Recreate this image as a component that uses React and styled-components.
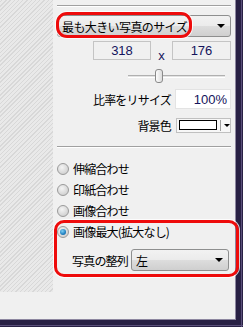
import React from "react";
import styled, { createGlobalStyle } from "styled-components";

const Global = createGlobalStyle`
  html, body { margin: 0; padding: 0; background: #f0f0f0; }
  body {
    font-family: "Noto Sans CJK JP", "Liberation Sans", sans-serif;
    font-size: 12px;
    color: #000;
  }
`;

const Frame = styled.div`
  position: relative;
  width: 243px;
  height: 327px;
  box-sizing: border-box;
  background: #282044;
  overflow: hidden;
`;

const Inner = styled.div`
  width: 236px;
  height: 320px;
  background: #f0f0f0;
  border-right: 1px solid #8d87a0;
  border-bottom: 1px solid #8d87a0;
  box-sizing: border-box;
  display: flex;
  flex-direction: column;
`;

const FrameLine = styled.div`
  position: absolute;
  background: #5a4f7a;
  ${({ $side }) =>
    $side === "right"
      ? "top: 0; bottom: 0; left: 241px; width: 1px;"
      : "left: 0; right: 0; top: 325px; height: 1px;"}
`;

const Top = styled.div`
  display: flex;
  height: 292px;
`;

const Hatch = styled.div`
  width: 53px;
  flex: none;
  background: repeating-linear-gradient(
    -45deg,
    #e9e9e9 0px,
    #e9e9e9 2px,
    #d8d8d8 2px,
    #d8d8d8 3px
  );
`;

const Panel = styled.div`
  flex: 1;
  display: flex;
  flex-direction: column;
  padding: 0 4px 0 4px;
`;

const Separator = styled.div`
  height: 1px;
  background: #a0a0a0;
  border-bottom: 1px solid #fff;
  margin-top: ${({ $top }) => $top}px;
`;

const Select = styled.div`
  height: 22px;
  box-sizing: border-box;
  border: 1px solid #8e8f8f;
  border-radius: 3px;
  background: linear-gradient(#f2f2f2 0%, #ebebeb 50%, #dddddd 51%, #cfcfcf 100%);
  display: flex;
  align-items: center;
  padding: 0 0 0 4px;
  width: ${({ $w }) => ($w ? `${$w}px` : "auto")};
  margin-top: ${({ $top }) => $top || 0}px;
`;

const SelectText = styled.span`
  flex: 1;
  white-space: nowrap;
  letter-spacing: -0.6px;
`;

const Arrow = styled.span`
  width: 0;
  height: 0;
  border-left: 4px solid transparent;
  border-right: 4px solid transparent;
  border-top: 4px solid #000;
  margin-right: ${({ $mr }) => $mr}px;
`;

const Row = styled.div`
  display: flex;
  justify-content: flex-end;
  align-items: center;
  margin-top: ${({ $top }) => $top}px;
  padding-right: ${({ $pr }) => $pr || 0}px;
  height: ${({ $h }) => $h}px;
  gap: ${({ $gap }) => $gap || 0}px;
`;

const NumBox = styled.div`
  width: ${({ $w }) => $w}px;
  height: 19px;
  box-sizing: border-box;
  border: 1px solid #c4c4c4;
  display: flex;
  align-items: center;
  justify-content: center;
  color: #14145c;
  font-family: "Liberation Sans", sans-serif;
  font-size: 13px;
`;

const Times = styled.span`
  width: 21px;
  text-align: center;
  color: #14145c;
  font-family: "Liberation Sans", sans-serif;
  font-size: 13px;
  padding-top: 9px;
`;

const SliderTrack = styled.div`
  position: relative;
  width: 97px;
  height: 3px;
  border-top: 1px solid #b0b0b0;
  border-bottom: 1px solid #fff;
  background: #e3e3e3;
  box-sizing: border-box;
`;

const Thumb = styled.div`
  position: absolute;
  left: 27px;
  top: -7px;
  width: 6px;
  height: 12px;
  border: 1px solid #8a8a8a;
  border-radius: 3px;
  background: linear-gradient(90deg, #fdfdfd, #dcdcdc);
`;

const Label = styled.span`
  white-space: nowrap;
  letter-spacing: -0.8px;
`;

const TextInput = styled.div`
  width: 56px;
  height: 20px;
  box-sizing: border-box;
  background: #fff;
  border: 1px solid #e3e3e3;
  color: #14145c;
  font-family: "Liberation Sans", sans-serif;
  font-size: 13px;
  text-align: right;
  padding: 1px 3px 0 0;
  line-height: 17px;
`;

const ColorPick = styled.div`
  width: 55px;
  height: 15px;
  box-sizing: border-box;
  border: 1px solid #c0c0c0;
  background: #f7f7f7;
  display: flex;
  align-items: center;
  padding-left: 2px;
`;

const Swatch = styled.div`
  width: 38px;
  height: 10px;
  box-sizing: border-box;
  border: 1px solid #000;
  background: #fff;
`;

const PickDivider = styled.div`
  width: 1px;
  height: 11px;
  background: #a0a0a0;
  margin: 0 3px 0 3px;
`;

const SmallArrow = styled.span`
  width: 0;
  height: 0;
  border-left: 3px solid transparent;
  border-right: 3px solid transparent;
  border-top: 3px solid #000;
`;

const Options = styled.div`
  display: flex;
  flex-direction: column;
  margin-top: 10px;
`;

const Option = styled.label`
  height: 21px;
  display: flex;
  align-items: center;
  gap: 4px;
  white-space: nowrap;
`;

const Radio = styled.span`
  width: 12px;
  height: 12px;
  box-sizing: border-box;
  border-radius: 50%;
  border: 1px solid #9a9a9a;
  background: radial-gradient(circle at 40% 35%, #f4f4f4 0%, #d4d4d4 70%, #c4c4c4 100%);
  display: flex;
  align-items: center;
  justify-content: center;
  &::after {
    content: "";
    width: 6px;
    height: 6px;
    border-radius: 50%;
    display: ${({ $on }) => ($on ? "block" : "none")};
    background: radial-gradient(circle at 40% 35%, #7fd0f5 0%, #1f7fc0 60%, #0b4f8a 100%);
  }
`;

const AlignRow = styled.div`
  display: flex;
  align-items: center;
  gap: 3px;
  margin-top: 7px;
  padding-left: 15px;
`;

const Footer = styled.div`
  flex: 1;
`;

const Highlight = styled.div`
  position: absolute;
  border: 3px solid #ee0b0b;
  border-radius: ${({ $r }) => $r}px;
  box-shadow: 0 0 0 1px rgba(255, 255, 255, 0.8);
  box-sizing: border-box;
  pointer-events: none;
`;

const options = [
  { label: "伸縮合わせ", on: false },
  { label: "印紙合わせ", on: false },
  { label: "画像合わせ", on: false },
  { label: "画像最大(拡大なし)", on: true },
];

export default function App() {
  return (
    <>
      <Global />
      <Frame>
        <Inner>
          <Top>
            <Hatch />
            <Panel>
              <Separator $top={5} />
              <Select $top={8}>
                <SelectText>最も大きい写真のサイズ</SelectText>
                <Arrow $mr={5} />
              </Select>
              <Row $top={4} $h={19}>
                <NumBox $w={58}>318</NumBox>
                <Times>x</Times>
                <NumBox $w={59}>176</NumBox>
              </Row>
              <Row $top={7} $h={18} $pr={6}>
                <SliderTrack>
                  <Thumb />
                </SliderTrack>
              </Row>
              <Row $top={4} $h={20} $gap={4}>
                <Label>比率をリサイズ</Label>
                <TextInput>100%</TextInput>
              </Row>
              <Row $top={7} $h={18} $gap={5}>
                <Label>背景色</Label>
                <ColorPick>
                  <Swatch />
                  <PickDivider />
                  <SmallArrow />
                </ColorPick>
              </Row>
              <Separator $top={12} />
              <Options>
                {options.map((o) => (
                  <Option key={o.label}>
                    <Radio $on={o.on} />
                    <Label>{o.label}</Label>
                  </Option>
                ))}
              </Options>
              <AlignRow>
                <Label>写真の整列</Label>
                <Select $w={98}>
                  <SelectText>左</SelectText>
                  <Arrow $mr={5} />
                </Select>
              </AlignRow>
            </Panel>
          </Top>
          <Footer />
        </Inner>
        <FrameLine $side="right" />
        <FrameLine $side="bottom" />
        <Highlight $r={11} style={{ left: 56, top: 12, width: 136, height: 26 }} />
        <Highlight $r={10} style={{ left: 54, top: 220, width: 185, height: 57 }} />
      </Frame>
    </>
  );
}
